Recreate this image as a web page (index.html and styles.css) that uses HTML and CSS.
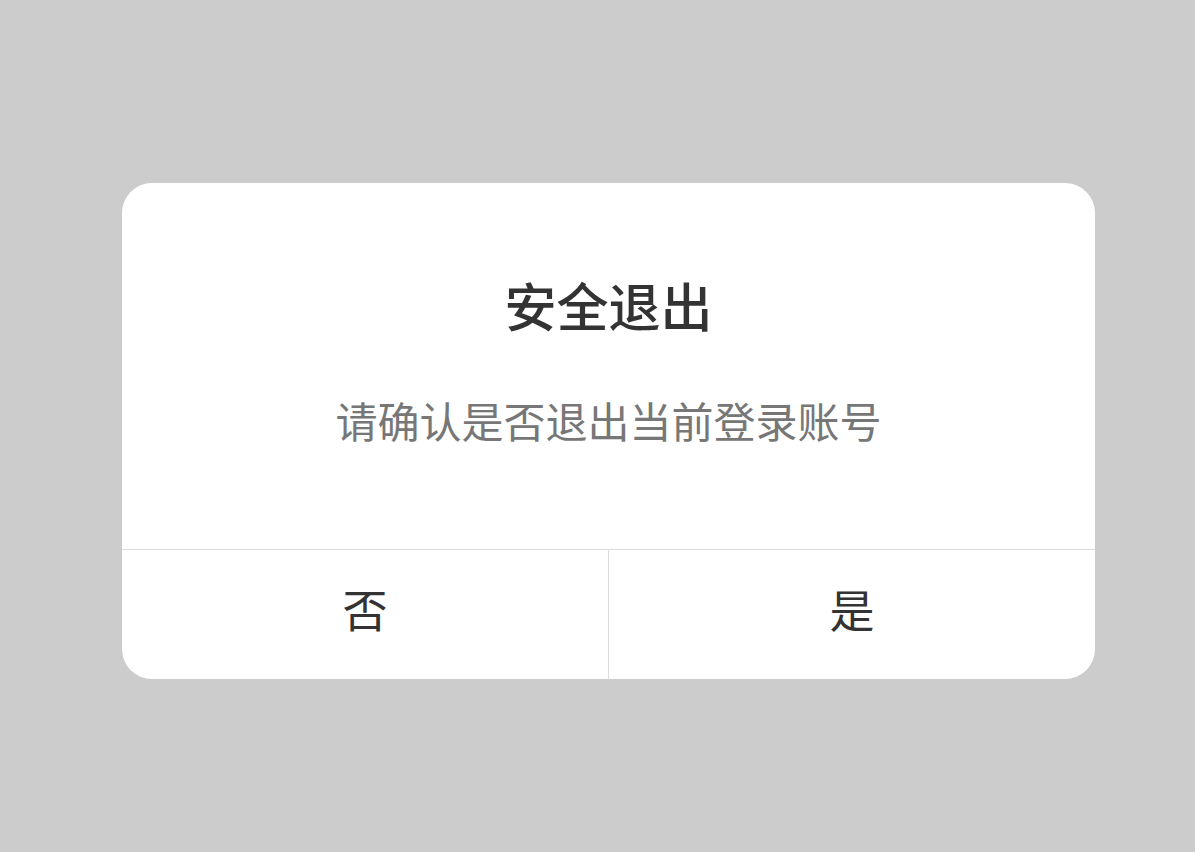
FILE: index.html
```html
<!DOCTYPE html>
<html lang="zh-CN">
<head>
<meta charset="utf-8">
<title>安全退出</title>
<link rel="stylesheet" href="styles.css">
</head>
<body>
<div class="dialog">
  <div class="dialog-body">
    <h1 class="dialog-title">安全退出</h1>
    <p class="dialog-message">请确认是否退出当前登录账号</p>
  </div>
  <div class="dialog-actions">
    <button class="dialog-btn">否</button>
    <button class="dialog-btn">是</button>
  </div>
</div>
</body>
</html>
```
FILE: styles.css
```css
html, body {
  margin: 0;
  height: 100%;
}

body {
  background: #cccccc;
  font-family: "Noto Sans CJK SC", "Noto Sans", sans-serif;
  padding: 183px 100px 0 122px;
  box-sizing: border-box;
}

.dialog {
  width: 973px;
  height: 496px;
  background: #ffffff;
  border-radius: 30px;
  overflow: hidden;
  display: flex;
  flex-direction: column;
}

.dialog-body {
  height: 367px;
  box-sizing: border-box;
  padding-top: 96px;
  display: flex;
  flex-direction: column;
  align-items: center;
  border-bottom: 1px solid #dcdcdc;
}

.dialog-title {
  margin: 0;
  font-size: 52px;
  line-height: 52px;
  font-weight: 500;
  color: #333333;
}

.dialog-message {
  margin: 68px 0 0;
  font-size: 42px;
  line-height: 42px;
  color: #777777;
}

.dialog-actions {
  flex: 1;
  display: flex;
}

.dialog-btn {
  flex: 1;
  border: 0;
  background: transparent;
  font-family: inherit;
  font-size: 45px;
  line-height: 45px;
  color: #333333;
  padding: 0 0 12px;
}

.dialog-btn + .dialog-btn {
  border-left: 1px solid #dcdcdc;
}
```
